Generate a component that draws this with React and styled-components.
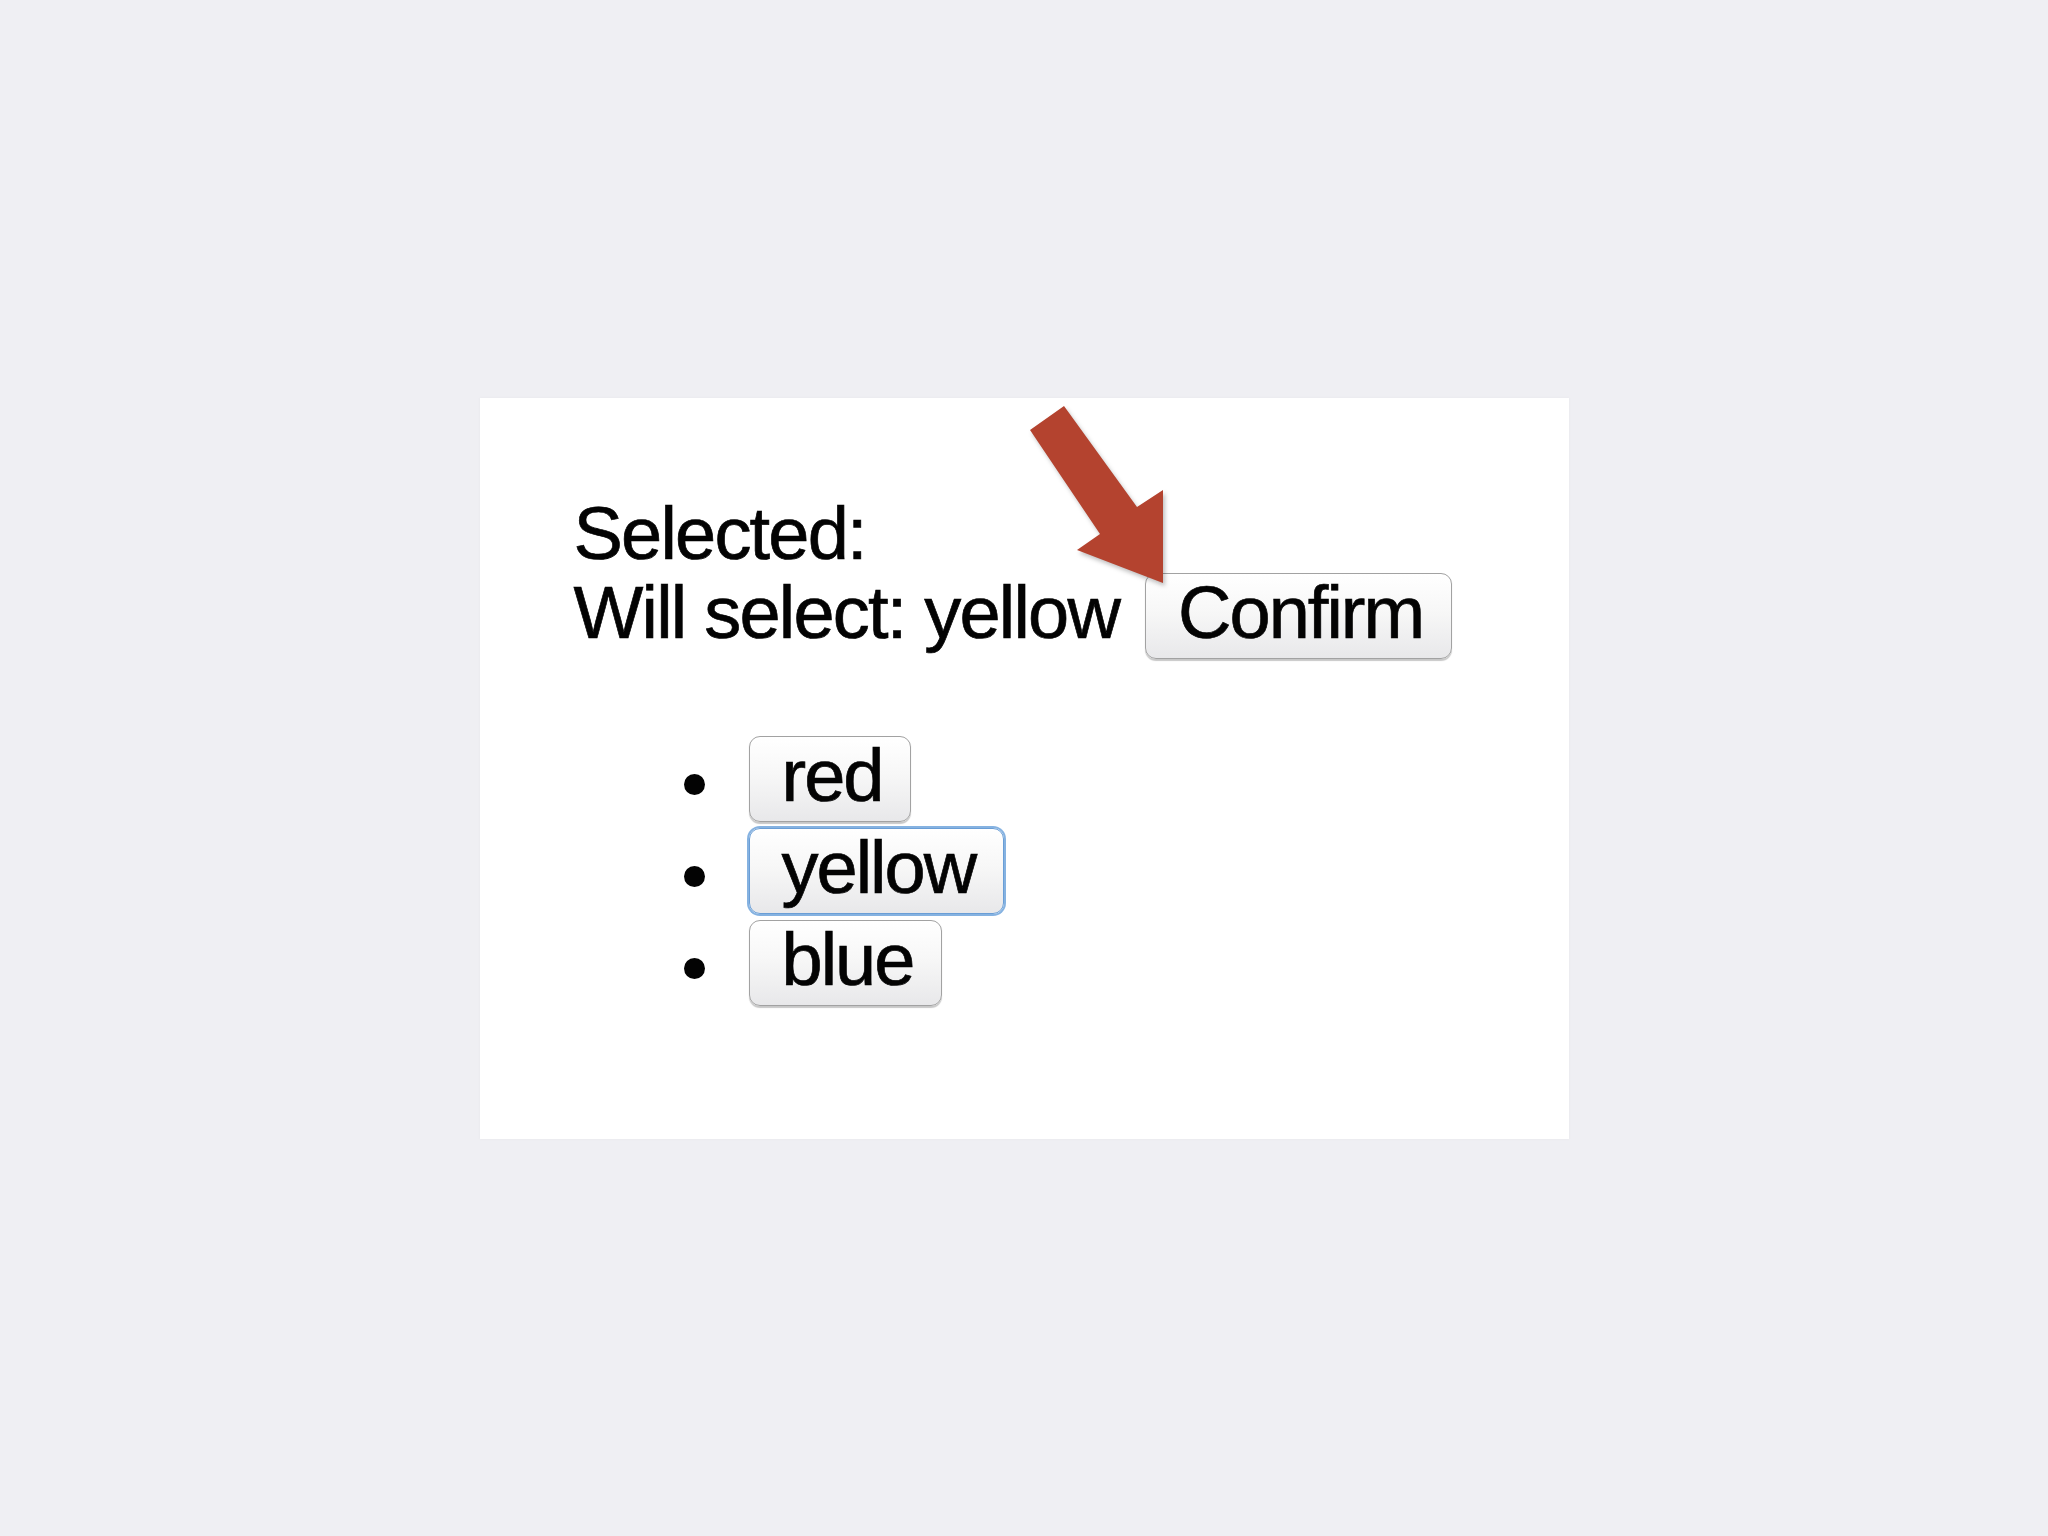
import React from 'react';
import styled, { createGlobalStyle } from 'styled-components';

const GlobalStyle = createGlobalStyle`
	html, body {
		margin: 0;
		padding: 0;
		background: #efeff3;
	}
	body {
		font-family: 'Liberation Sans', Arial, Helvetica, sans-serif;
	}
`;

const Page = styled.div`
	min-height: 100vh;
	display: flex;
	align-items: center;
	justify-content: center;
`;

const Slide = styled.div`
	position: relative;
	box-sizing: border-box;
	width: 1089px;
	height: 741px;
	padding: 96px 0 0 94px;
	background: #ffffff;
	box-shadow: 0 0 3px rgba(0, 0, 0, 0.04);
	color: #030303;
	font-size: 74px;
	letter-spacing: -1.8px;
	line-height: 79px;
	-webkit-text-stroke: 0.7px #030303;
`;

const Line = styled.div`
	white-space: nowrap;
`;

const Button = styled.button`
	font-family: inherit;
	font-size: 74px;
	letter-spacing: -2px;
	line-height: 78px;
	color: #030303;
	-webkit-text-stroke: 0.7px #030303;
	margin: 0 0 0 ${(props) => props.gap || 0}px;
	padding: 0 28px 6px 32px;
	border: 1.5px solid ${(props) => (props.focused ? '#6a9ed6' : '#a2a2a2')};
	border-radius: 11px;
	background: linear-gradient(#ffffff 0%, #f7f7f7 45%, #e8e8ea 100%);
	box-shadow: ${(props) =>
		props.focused
			? '0 0 0 2px rgba(120, 170, 222, 0.9)'
			: '0 1.5px 1px rgba(0, 0, 0, 0.22)'};
	cursor: pointer;
	vertical-align: baseline;
`;

const List = styled.ul`
	list-style: none;
	margin: 77px 0 0;
	padding: 0 0 0 110px;
	display: flex;
	flex-direction: column;
	gap: 6px;
`;

const Item = styled.li`
	display: flex;
	align-items: center;
	gap: 44px;
	&::before {
		content: '';
		width: 21px;
		height: 21px;
		margin-top: 11px;
		border-radius: 50%;
		background: #030303;
		flex-shrink: 0;
	}
`;

const Arrow = styled.svg`
	position: absolute;
	left: 540px;
	top: 0;
	width: 160px;
	height: 200px;
	z-index: 2;
	filter: drop-shadow(2px 3px 2px rgba(0, 0, 0, 0.25));
`;

const colors = ['red', 'yellow', 'blue'];

const App = () => {
	const selected = '';
	const pending = 'yellow';

	return (
		<Page>
			<GlobalStyle />
			<Slide>
				<Arrow viewBox="0 0 160 200">
					<polygon
						points="44,8 10,32 80,136 57,152 143,185 143,92 117,109"
						fill="#b4432f"
					/>
				</Arrow>
				<Line>Selected: {selected}</Line>
				<Line>
					Will select: {pending}
					<Button gap={26}>Confirm</Button>
				</Line>
				<List>
					{colors.map((color) => (
						<Item key={color}>
							<Button focused={color === pending}>{color}</Button>
						</Item>
					))}
				</List>
			</Slide>
		</Page>
	);
};

export default App;
